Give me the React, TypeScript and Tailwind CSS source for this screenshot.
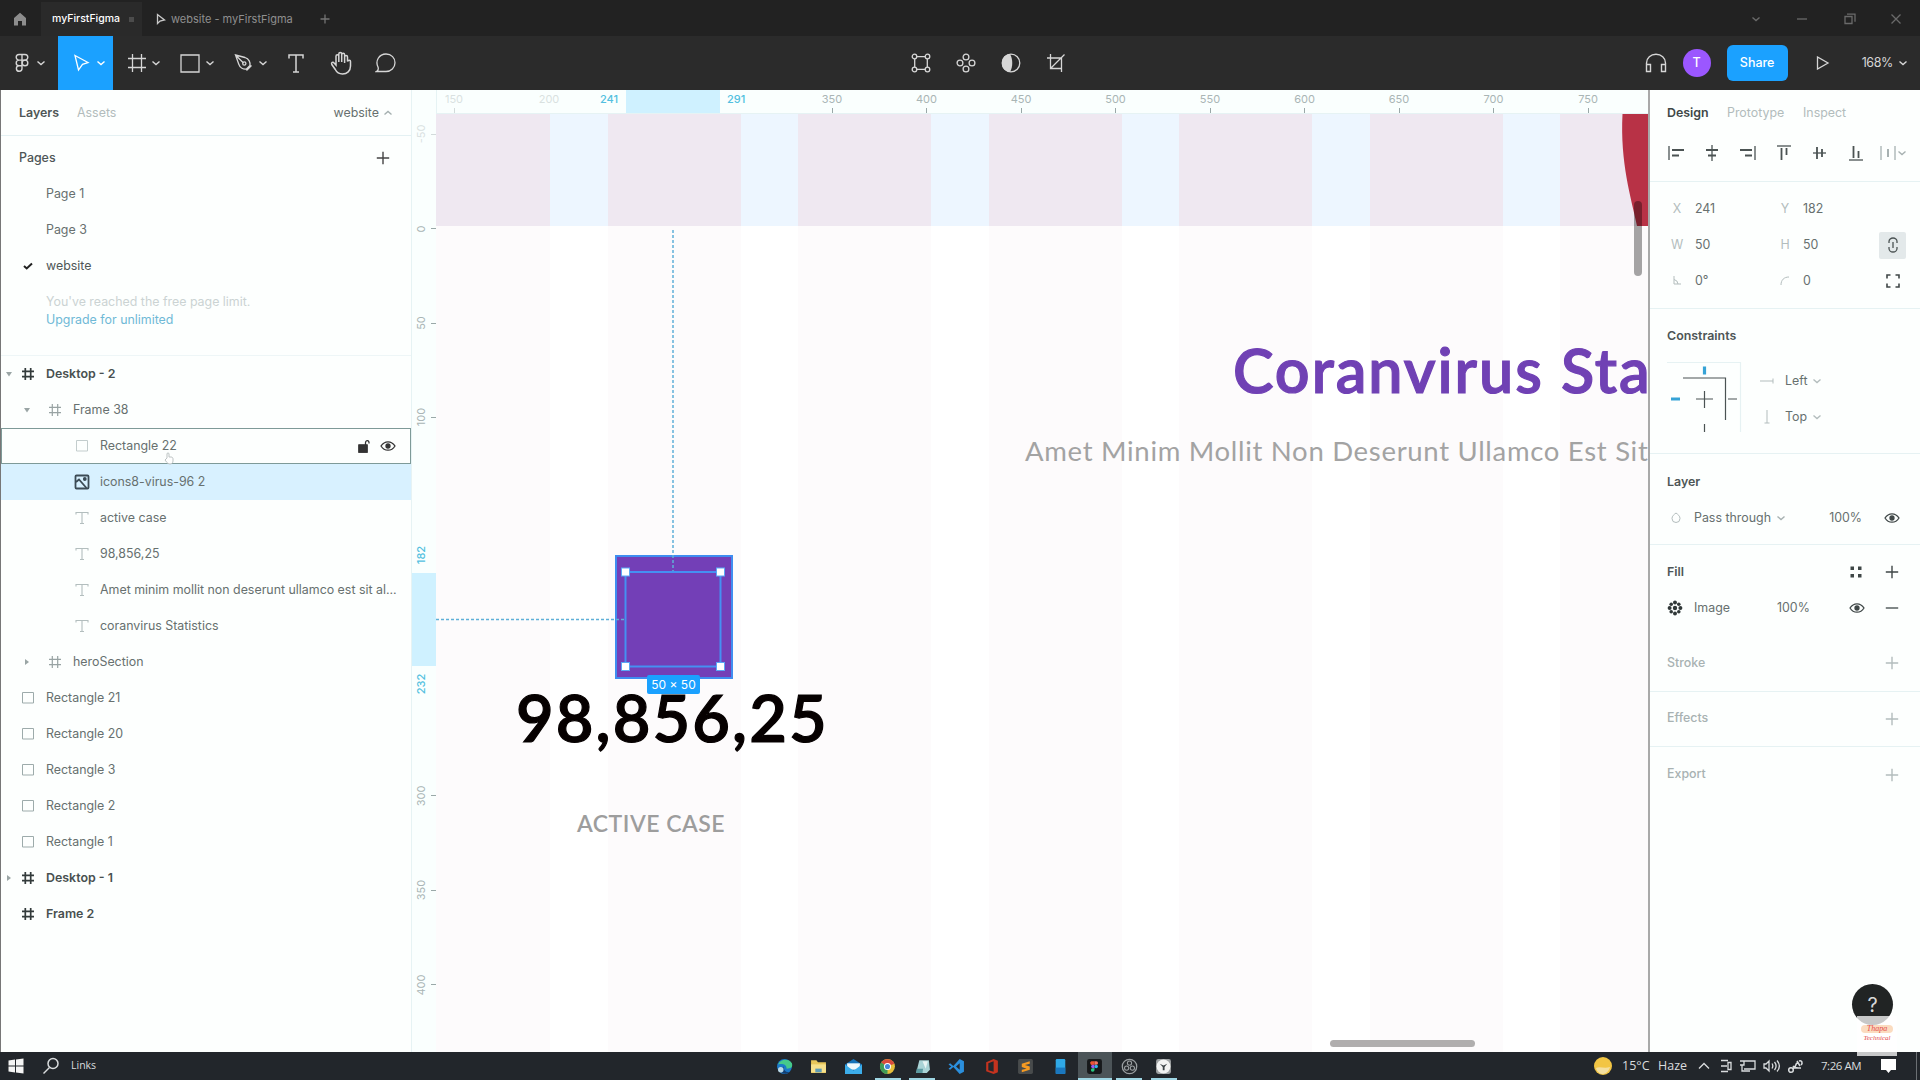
import type { ReactNode } from "react";

const ROW = "flex h-9 shrink-0 items-center";

function Svg({ w, h, children, className = "", sw = 1.3 }: { w: number; h: number; children: ReactNode; className?: string; sw?: number }) {
  return (
    <svg width={w} height={h} viewBox={`0 0 ${w} ${h}`} fill="none" stroke="currentColor" strokeWidth={sw} className={`shrink-0 ${className}`}>
      {children}
    </svg>
  );
}

const Chevron = ({ className = "" }: { className?: string }) => (
  <Svg w={16} h={16} className={className} sw={1.4}>
    <path d="M4.5 6.5 8 9.5l3.5-3" />
  </Svg>
);

const Plus = ({ className = "" }: { className?: string }) => (
  <Svg w={14} h={14} className={className} sw={1.4}>
    <path d="M7 .8v12.4M.8 7h12.4" />
  </Svg>
);

const Eye = ({ className = "" }: { className?: string }) => (
  <Svg w={16} h={12} className={className} sw={1.3}>
    <path d="M1 6c1.700-2.700 4-4.200 7-4.200S13.300 3.300 15 6c-1.700 2.700-4 4.200-7 4.200S2.700 8.700 1 6z" />
    <circle cx="8" cy="6" r="2" fill="currentColor" />
  </Svg>
);

const Hash = ({ className = "", sw = 1.2 }: { className?: string; sw?: number }) => (
  <Svg w={14} h={14} className={className} sw={sw}>
    <path d="M4.300 1v12M9.700 1v12M1 4.300h12M1 9.700h12" />
  </Svg>
);

/* ---------- Title bar ---------- */

function TitleBar() {
  return (
    <div className="flex h-9 items-center bg-[#222222] pt-[2px] text-[#8f8f8f]">
      <div className="flex w-[41px] justify-center">
        <Svg w={14} h={14} className="-ml-[2px] text-[#8d8d8d]">
          <path d="M1 6 7 .8 13 6v7.500H9V9H5v4.500H1z" fill="currentColor" stroke="none" />
        </Svg>
      </div>
      <div className="flex h-full w-[101px] items-center bg-[#2a2a2a] pl-[11px] font-medium text-white">
        <span className="w-[76px] text-[10.5px]">myFirstFigma</span>
        <span className="ml-px h-[5px] w-[5px] bg-[#4c4c4c]" />
      </div>
      <Svg w={10} h={12} className="ml-[14px] text-[#c9c9c9]">
        <path d="M1.500 1.500v9l2.500-2.500 4.500-1z" />
      </Svg>
      <span className="ml-[5px] w-[150px] whitespace-nowrap text-[11px]">website - myFirstFigma</span>
      <Svg w={10} h={10} className="-ml-px text-[#747474]"><path d="M5 .5v9M.5 5h9" /></Svg>
      <div className="ml-auto flex items-center text-[#6a6a6a]">
        <Chevron />
        <Svg w={12} h={12} className="ml-[32px]"><path d="M1 6h10" /></Svg>
        <Svg w={12} h={12} className="ml-[36px]"><path d="M1 3.500h7v7H1zM3 1.200h8v7.500" /></Svg>
        <Svg w={12} h={12} className="mr-[18px] ml-[34px]"><path d="m1.500 1.500 9 9m0-9-9 9" /></Svg>
      </div>
    </div>
  );
}

/* ---------- Toolbar ---------- */

function Tool({ children, active }: { children: ReactNode; active?: boolean }) {
  return (
    <div className={`flex h-full items-center pl-[11px] ${active ? "w-[55px] bg-[#1ba1ff] text-white" : "w-[53.5px]"}`}>
      <div className="flex w-6 justify-center">{children}</div>
      <Chevron />
    </div>
  );
}

function Toolbar() {
  return (
    <div className="flex h-[54px] items-center bg-[#2b2b2b] text-[#d6d6d6]">
      <div className="flex w-[58px] items-center pl-[10px]">
        <Svg w={24} h={20} sw={1.4}>
          <path d="M12 1.500H9a2.800 2.800 0 0 0 0 5.600h3zM12 1.500h3a2.800 2.800 0 0 1 0 5.600h-3zM12 7.100H9a2.800 2.800 0 0 0 0 5.600h3zM12 12.700H9a2.800 2.800 0 1 0 3 2.800z" />
          <circle cx="15" cy="9.900" r="2.800" />
        </Svg>
        <Chevron className="-ml-px" />
      </div>
      <Tool active>
        <Svg w={18} h={18} className="ml-[2px]"><path d="m2 1.500 13 7-5.500 1.800-4 5.700z" /></Svg>
      </Tool>
      <Tool>
        <Svg w={18} h={18} className="ml-[2px]"><path d="M4.500 0v18M13.500 0v18M0 4.500h18M0 13.500h18" /></Svg>
      </Tool>
      <Tool>
        <Svg w={20} h={19}><path d="M1 1h18v17H1z" /></Svg>
      </Tool>
      <Tool>
        <Svg w={20} h={20} className="ml-[2px]">
          <path d="m1.500 2 9.500 2.500c4 1.200 5.500 5 5 8l-3.500 3.500c-3 .5-6.500-1-7.800-5zM1.500 2l8 8M12.500 17.500l5-5" />
          <circle cx="10.300" cy="10.500" r="1.600" />
        </Svg>
      </Tool>
      <div className="flex w-[45px] justify-center">
        <Svg w={16} h={19} sw={1.500}><path d="M1 4.500V1h14v3.500M8 1v17M5 18h6" /></Svg>
      </div>
      <div className="flex w-[45px] justify-center">
        <Svg w={22} h={24} sw={1.500}>
          <path d="M6 14V5.200c0-2 2.800-2 2.800 0V11 3c0-2 2.900-2 2.900 0v8V3.800c0-2 2.900-2 2.900 0V12 6c0-2 2.900-1.900 2.900 0v4.500c1-2 3-1.500 3 0V15c0 5-3.500 8-8 8-3.500 0-6-2-7.200-4.500L1.800 13.500c-1-2 1.200-3 2.300-1.500z" />
        </Svg>
      </div>
      <div className="flex w-[45px] justify-center">
        <Svg w={22} h={20}><path d="M1.500 18.500c1.800-1 2.200-2.500 1.500-4.500-3-6 1-13 8-13 5.500 0 9 4 9 8.700 0 5-4 8.800-9 8.800z" /></Svg>
      </div>
      <div className="ml-[502px] flex items-center gap-[25px]">
        <Svg w={20} h={20}>
          <circle cx="3.500" cy="3.500" r="2.300" /><circle cx="16.500" cy="3.500" r="2.300" />
          <circle cx="3.500" cy="16.500" r="2.300" /><circle cx="16.500" cy="16.500" r="2.300" />
          <path d="M5.800 3.700h8.400M5.800 16.300h8.400M3.700 5.800v8.400M16.300 5.800v8.400" />
        </Svg>
        <Svg w={20} h={20}>
          <circle cx="10" cy="4" r="2.900" /><circle cx="10" cy="16" r="2.900" />
          <circle cx="4" cy="10" r="2.900" /><circle cx="16" cy="10" r="2.900" />
        </Svg>
        <Svg w={20} h={20}>
          <circle cx="10" cy="10" r="8.800" />
          <path d="M9 1C3 2 1 6 1 10s2 8 8 9c3-5 3-13 0-18z" fill="currentColor" stroke="none" />
        </Svg>
        <Svg w={20} h={20}><path d="M4.500 1v14.500H16M1 5h14.500v14M4.500 15.500 18.500 1.500" /></Svg>
      </div>
      <div className="ml-auto flex items-center">
        <Svg w={22} h={20} sw={1.400}><path d="M1.500 15v-5a9.500 8.700 0 0 1 19 0v5M1.500 11.500h4v7h-4zM16.500 11.500h4v7h-4z" /></Svg>
        <div className="ml-4 flex h-7 w-7 items-center justify-center rounded-full bg-[#9b57ff] text-[12.5px] font-medium text-white">T</div>
        <div className="ml-4 flex h-9 w-[61px] items-center justify-center rounded-[6px] bg-[#1ba1ff] text-[12.500px] font-medium text-white">Share</div>
        <Svg w={14} h={14} className="ml-[28px]"><path d="M1.500 1v12L12 7z" /></Svg>
        <span className="ml-[32px] text-[12.5px] tracking-[-0.03em]">168%</span>
        <Chevron className="mr-[9px] ml-[2px]" />
      </div>
    </div>
  );
}

/* ---------- Layers panel ---------- */

type LayerItem = { name: string; kind: "frame" | "rect" | "text" | "image"; depth: number; arrow?: "open" | "closed"; bold?: boolean; state?: "hover" | "selected" };

const LAYERS: LayerItem[] = [
  { name: "Desktop - 2", kind: "frame", depth: 0, arrow: "open", bold: true },
  { name: "Frame 38", kind: "frame", depth: 1, arrow: "open" },
  { name: "Rectangle 22", kind: "rect", depth: 2, state: "hover" },
  { name: "icons8-virus-96 2", kind: "image", depth: 2, state: "selected" },
  { name: "active case", kind: "text", depth: 2 },
  { name: "98,856,25", kind: "text", depth: 2 },
  { name: "Amet minim mollit non deserunt ullamco est sit al...", kind: "text", depth: 2 },
  { name: "coranvirus Statistics", kind: "text", depth: 2 },
  { name: "heroSection", kind: "frame", depth: 1, arrow: "closed" },
  { name: "Rectangle 21", kind: "rect", depth: 0 },
  { name: "Rectangle 20", kind: "rect", depth: 0 },
  { name: "Rectangle 3", kind: "rect", depth: 0 },
  { name: "Rectangle 2", kind: "rect", depth: 0 },
  { name: "Rectangle 1", kind: "rect", depth: 0 },
  { name: "Desktop - 1", kind: "frame", depth: 0, arrow: "closed", bold: true },
  { name: "Frame 2", kind: "frame", depth: 0, bold: true },
];

const INDENT = ["pl-[3px]", "pl-[21px]", "pl-[57px]"];

function LayerIcon({ item }: { item: LayerItem }) {
  if (item.kind === "frame") return <Hash className={item.bold ? "text-[#333b3b]" : "text-[#98a3a3]"} sw={item.bold ? 1.700 : 1.200} />;
  if (item.kind === "rect")
    return <Svg w={14} h={14} className={item.depth ? "text-[#c3cdcd]" : "text-[#9dabab]"} sw={1}><path d="M1.500 1.500h11v10.500h-11z" /></Svg>;
  if (item.kind === "text")
    return <Svg w={14} h={14} className="text-[#b3bebe]" sw={1.100}><path d="M1 3.500v-2h12v2M7 1.500v11M5 12.500h4" /></Svg>;
  return (
    <Svg w={16} h={16} className="text-[#3c4b55]" sw={1.800}>
      <rect x="1.500" y="1.500" width="13" height="13" rx="1" />
      <path d="m2 8 3-2.500 7.500 8.500" />
      <circle cx="10.800" cy="5" r="1" fill="currentColor" />
    </Svg>
  );
}

function LayerRow({ item }: { item: LayerItem }) {
  const tone = item.state === "hover" ? "border border-[#7e9a98]" : item.state === "selected" ? "border border-[#d8f1ff] bg-[#d8f1ff]" : "border border-transparent";
  return (
    <div className={`${ROW} ${tone} ${INDENT[item.depth]}`}>
      <span className="flex w-[8px] justify-center text-[#9aa5a5]">
        {item.arrow && (
          <Svg w={6} h={6}>
            <path d={item.arrow === "open" ? "M0 1h6L3 5.500z" : "M1 0v6l4-3z"} fill="currentColor" stroke="none" />
          </Svg>
        )}
      </span>
      <span className={`${item.depth === 1 ? "ml-[14px]" : "ml-[5px]"} flex w-[20px] justify-center`}><LayerIcon item={item} /></span>
      <span className={`ml-[8px] whitespace-nowrap ${item.bold ? "font-semibold text-[#485050]" : "text-[#67706f]"}`}>{item.name}</span>
      {item.state === "hover" && (
        <span className="mr-[14px] ml-auto flex items-center gap-[10px] text-[#333]">
          <Svg w={12} h={14}><path d="M1 6.500h8v6.500H1zM7.500 7V4c0-3.500 4-3 3.500.5" fill="none" /><path d="M1 6h8v7H1z" fill="currentColor" /></Svg>
          <Eye />
        </span>
      )}
    </div>
  );
}

function LeftPanel() {
  return (
    <aside className="relative flex w-[411px] shrink-0 flex-col border-l border-[#777] bg-[#fdfffe] pt-[0.5px] text-[12.4px] text-[#67706f]">
      <div className="flex h-[45.5px] items-center border-b border-[#e4f1f3] pt-px pr-[15px] pl-[18px]">
        <span className="font-semibold text-[#4e5656]">Layers</span>
        <span className="ml-[18px] text-[#b2bcbc]">Assets</span>
        <span className="ml-auto">website</span>
        <Chevron className="ml-px rotate-180 text-[#a5b0b0]" />
      </div>
      <div className={`${ROW} mt-1 justify-between pr-[21px] pl-[18px]`}>
        <span className="font-medium text-[#4e5656]">Pages</span>
        <Plus className="text-[#444]" />
      </div>
      <div className={`${ROW} pl-[45px]`}>Page 1</div>
      <div className={`${ROW} pl-[45px]`}>Page 3</div>
      <div className={`${ROW} pl-[22px]`}>
        <Svg w={10} h={8} className="text-[#222]" sw={2}><path d="m1 4 2.700 2.500L9 1.500" /></Svg>
        <span className="ml-[13px] text-[#4e5656]">website</span>
      </div>
      <div className="flex h-[72px] flex-col border-b border-[#eef6f7] pt-[9px] pl-[45px] leading-[18px]">
        <span className="text-[#cbd3d3]">You've reached the free page limit.</span>
        <span className="text-[#6fb9d6]">Upgrade for unlimited</span>
      </div>
      {LAYERS.map((item) => <LayerRow key={item.name} item={item} />)}
      <Svg w={10} h={13} className="absolute top-[362px] left-[163px] text-[#bcc3c3]" sw={1}>
        <path d="M3 6V2c0-1.500 2-1.500 2 0v3h2c1.500 0 2 1 2 2v2c0 2-1.500 3-3 3S3 11 1 8z" fill="#fff" />
      </Svg>
    </aside>
  );
}

/* ---------- Canvas ---------- */

const H_TICKS = [
  { v: "150", x: 454, faint: true }, { v: "200", x: 549, faint: true, noTick: true }, { v: "350", x: 832 }, { v: "400", x: 926.5 }, { v: "450", x: 1021 },
  { v: "500", x: 1115.5 }, { v: "550", x: 1210 }, { v: "600", x: 1304.5 }, { v: "650", x: 1399 }, { v: "700", x: 1493.500 }, { v: "750", x: 1588 },
];

const V_TICKS = [
  { v: "-50", y: 134, faint: true }, { v: "0", y: 228.500 }, { v: "50", y: 323 }, { v: "100", y: 417 },
  { v: "300", y: 795.500 }, { v: "350", y: 890 }, { v: "400", y: 984.500 },
];

const LAYOUT_COLUMNS = ["w-[114px]", "w-[133px]", "w-[133px]", "w-[133px]", "w-[133px]", "w-[133px]", "w-[89px]"];

function TopRuler() {
  return (
    <div className="relative ml-6 h-6 overflow-hidden border-b border-l border-[#e6f3f4] bg-[#fafffe] text-[11px] text-[#a9b5b5]">
      {H_TICKS.map((t) => (
        <div key={t.v} className={`absolute top-[1px] flex w-10 -translate-x-1/2 flex-col items-center ${t.faint ? "opacity-40" : ""}`} style={{ left: t.x - 437 }}>
          <span className="h-[17px] leading-[16px]">{t.v}</span>
          {!t.noTick && <span className="h-[6px] w-px bg-[#9aa8a8]" />}
        </div>
      ))}
      <div className="absolute top-0 left-[189px] h-6 w-[94px] bg-[#cff1ff]" />
      <span className="absolute top-[1px] left-[163px] font-medium leading-[16px] text-[#52bfe0]">241</span>
      <span className="absolute top-[1px] left-[290px] font-medium leading-[16px] text-[#52bfe0]">291</span>
    </div>
  );
}

function SideRuler() {
  return (
    <div className="relative w-6 shrink-0 overflow-hidden bg-[#fafffe] text-[11px] text-[#a9b5b5]">
      {V_TICKS.map((t) => (
        <div key={t.v} className={`absolute left-0 flex h-6 w-6 -translate-y-1/2 items-center justify-between pl-[1px] ${t.faint ? "opacity-40" : ""}`} style={{ top: t.y - 114 }}>
          <span className="flex h-4 w-4 -rotate-90 items-center justify-center">{t.v}</span>
          <span className="h-px w-[5px] bg-[#9aa8a8]" />
        </div>
      ))}
      <div className="absolute top-[459px] left-0 h-[93px] w-6 bg-[#cff1ff]" />
      <span className="absolute top-[433px] left-[1px] flex h-4 w-4 -rotate-90 items-center justify-center font-medium text-[#52bfe0]">182</span>
      <span className="absolute top-[562px] left-[1px] flex h-4 w-4 -rotate-90 items-center justify-center font-medium text-[#52bfe0]">232</span>
    </div>
  );
}

function Canvas() {
  return (
    <main className="flex min-w-0 flex-1 flex-col border-l border-[#e6f3f4] bg-[#fafffe]">
      <TopRuler />
      <div className="flex min-h-0 flex-1">
        <SideRuler />
        <div className="relative flex-1 overflow-hidden bg-white">
          <div className="h-[112px] bg-[#edf6ff]" />
          <div className="absolute inset-0 flex gap-[57.500px]">
            {LAYOUT_COLUMNS.map((w, i) => (
              <div key={i} className={`${w} shrink-0`}>
                <div className="h-[112px] bg-[#efe8f1]" />
                <div className="h-full bg-[#fdfbfc]" />
              </div>
            ))}
          </div>
          <svg width="28" height="112" viewBox="0 0 28 112" className="absolute top-0 left-[1184px]">
            <path d="M2.500 0H28v112H17C11 83 0 49 2.500 0z" fill="#b83246" />
          </svg>

          <span className="absolute top-[216px] left-[797px] whitespace-nowrap font-[Lato] text-[61px] leading-[80px] font-semibold tracking-[0.032em] text-[#7041b4] [-webkit-text-stroke:1.2px_#7041b4]">Coranvirus Sta</span>
          <span className="absolute top-[317px] left-[589px] whitespace-nowrap font-[Lato] text-[27.5px] leading-[40px] tracking-[0.7px] text-[#a3a3a3]">Amet Minim Mollit Non Deserunt Ullamco Est Sit</span>

          <div className="absolute top-[441px] left-[179px] h-[124px] w-[118px] border-2 border-[#3f8df0] bg-[#733fb7]" />
          <span className="absolute top-[563px] left-[80px] whitespace-nowrap font-[Lato] text-[65px] leading-[80px] font-semibold tracking-[2.1px] text-[#060000] [-webkit-text-stroke:1.2px_#060000]">98,856,25</span>
          <span className="absolute top-[694px] left-[141px] whitespace-nowrap font-[Lato] text-[23px] leading-[30px] font-semibold tracking-[0.5px] text-[#9d9d9d]">ACTIVE CASE</span>

          <svg width="300" height="570" viewBox="0 0 300 570" className="absolute top-0 left-0" fill="none">
            <path d="M237 116v342M0 505.500h190" stroke="#5fb0d8" strokeWidth="1.500" strokeDasharray="3 2" />
            <path d="M189.500 458h95v94.500h-95z" stroke="#4590f2" strokeWidth="2" />
            {[[189.5, 458], [284.5, 458], [189.5, 552.5], [284.5, 552.5]].map(([x, y]) => (
              <rect key={`${x}-${y}`} x={x - 4} y={y - 4} width="8" height="8" fill="#fff" stroke="#5aa7f5" />
            ))}
          </svg>
          <span className="absolute top-[561px] left-[211px] flex h-[19px] w-[53px] items-center justify-center rounded-[2px] bg-[#1ba1ff] text-[12px] text-white">50 × 50</span>

          <div className="absolute top-[87px] left-[1198px] h-[75px] w-[8px] rounded-full bg-black/35" />
          <div className="absolute top-[926px] left-[894px] h-[7px] w-[145px] rounded-full bg-[#b0aeae]" />
        </div>
      </div>
    </main>
  );
}

/* ---------- Design panel ---------- */

function Field({ label, value, className }: { label: ReactNode; value: string; className: string }) {
  return (
    <div className={`flex items-center ${className}`}>
      <span className="flex w-[16px] justify-center text-[#b3bdbd]">{label}</span>
      <span className="ml-[10px]">{value}</span>
    </div>
  );
}

function EmptySection({ title, border }: { title: string; border?: boolean }) {
  return (
    <section className={`flex h-[55.5px] items-center justify-between pr-[21px] pl-[17px] text-[#a8b2b2] ${border ? "border-b border-[#e6f2f3]" : ""}`}>
      <span className="font-medium">{title}</span>
      <Plus className="text-[#b3bdbd]" />
    </section>
  );
}

function AlignIcons() {
  return (
    <div className="flex h-[46px] items-center border-b border-[#e6f2f3] pb-[11px] pl-[18px] text-[#4b5353]">
      <div className="flex items-center gap-[20px]">
        <Svg w={16} h={16} sw={1.800}><path d="M1 1v14" strokeWidth="1.300" /><path d="M4 5h12M4 10.500h7" /></Svg>
        <Svg w={16} h={16} sw={1.800}><path d="M8 0v16" strokeWidth="1.300" /><path d="M2 5h12M4 10.500h8" /></Svg>
        <Svg w={16} h={16} sw={1.800}><path d="M15 1v14" strokeWidth="1.300" /><path d="M0 5h12M5 10.500h7" /></Svg>
        <Svg w={16} h={16} sw={1.800}><path d="M1 1h14" strokeWidth="1.300" /><path d="M5.500 3v12M10.500 3v7" /></Svg>
        <Svg w={16} h={16} sw={1.800}><path d="M1 8h13" strokeWidth="1.300" /><path d="M5 2v12M10 4v8" /></Svg>
        <Svg w={16} h={16} sw={1.800}><path d="M1 15h14" strokeWidth="1.300" /><path d="M5.500 1v12M10.500 6v7" /></Svg>
      </div>
      <Svg w={16} h={16} className="ml-[16px] text-[#a7b1b1]"><path d="M1 1v14M15 1v14" /><path d="M8 4v8" strokeWidth="2" /></Svg>
      <Chevron className="-ml-[2px] text-[#a7b1b1]" />
    </div>
  );
}

function RightPanel() {
  return (
    <aside className="flex w-[272px] shrink-0 flex-col border-l-2 border-[#a9a9a9] bg-[#fdfffe] pt-[0.5px] text-[12.4px] text-[#67706f]">
      <div className="flex h-[45.5px] items-center pt-px pl-[17px] text-[#b2bcbc]">
        <span className="w-[60px] font-semibold text-[#3f4747]">Design</span>
        <span className="w-[76px]">Prototype</span>
        <span>Inspect</span>
      </div>
      <AlignIcons />

      <section className="h-[127px] border-b border-[#e6f2f3] pt-[9px]">
        <div className={ROW}>
          <Field className="w-[108px] pl-[19px]" label="X" value="241" />
          <Field className="pl-[19px]" label="Y" value="182" />
        </div>
        <div className={ROW}>
          <Field className="w-[108px] pl-[19px]" label="W" value="50" />
          <Field className="pl-[19px]" label="H" value="50" />
          <span className="mr-[14px] ml-auto flex h-[27px] w-[27px] items-center justify-center rounded-[2px] bg-[#e3e9ea] text-[#4b5353]">
            <Svg w={12} h={16}><path d="M2 6V4.500a4 3.500 0 0 1 8 0V6M2 10v1.500a4 3.500 0 0 0 8 0V10M6 5v6" /></Svg>
          </span>
        </div>
        <div className={ROW}>
          <Field className="w-[108px] pl-[19px]" label={<Svg w={9} h={9} sw={1}><path d="M1 0v8h7M1 3.500A5 5 0 0 1 5 8" /></Svg>} value="0°" />
          <Field className="pl-[19px]" label={<Svg w={10} h={10} sw={1}><path d="M1 9c0-5 3-8 8-8" /></Svg>} value="0" />
          <Svg w={14} h={14} className="mr-[20px] ml-auto text-[#3f4747]" sw={1.600}><path d="M1 4.500V1h3.500M9.500 1H13v3.500M13 9.500V13H9.500M4.500 13H1V9.500" /></Svg>
        </div>
      </section>

      <section className="h-[145px] border-b border-[#e6f2f3] pt-[9px] pl-[17px]">
        <div className={`${ROW} font-semibold text-[#4e5656]`}>Constraints</div>
        <div className="mt-[9px] flex">
          <Svg w={75} h={72} sw={1.200} className="-mt-px text-[#4b5353]">
            <path d="M0 .5h74M73.500 0v70" stroke="#e6f2f3" />
            <path d="M16 16h42.500v42M61 37h9M37.500 62v8M37.500 29v17M29 37h17" />
            <path d="M37.500 4.500v8M4 37h9" stroke="#36a3d6" strokeWidth="3.200" />
          </Svg>
          <div className="ml-[18px]">
            <div className={ROW}>
              <Svg w={14} h={8} className="text-[#b3bdbd]" sw={1}><path d="M0 4h13M13 1.500v5" /></Svg>
              <span className="ml-[11px]">Left</span><Chevron className="ml-[2px] text-[#b3bdbd]" />
            </div>
            <div className={ROW}>
              <Svg w={14} h={14} className="text-[#b3bdbd]" sw={1}><path d="M7 0v13M4.500 13h5" /></Svg>
              <span className="ml-[11px]">Top</span><Chevron className="ml-[2px] text-[#b3bdbd]" />
            </div>
          </div>
        </div>
      </section>

      <section className="h-[91px] border-b border-[#e6f2f3] pt-[10px] pl-[17px]">
        <div className={`${ROW} font-semibold text-[#4e5656]`}>Layer</div>
        <div className={`${ROW} pr-[20px]`}>
          <Svg w={18} h={12} className="text-[#b3bdbd]" sw={1}><path d="M9 1c2 1.500 4 3 4 5.500a4 4 0 0 1-8 0C5 4 7 2.500 9 1z" /></Svg>
          <span className="ml-[9px]">Pass through</span><Chevron className="ml-[2px] text-[#a7b1b1]" />
          <span className="mr-[22px] ml-auto">100%</span>
          <Eye className="text-[#3f4747]" />
        </div>
      </section>

      <section className="h-[91px] pt-[9px] pr-[21px] pl-[17px]">
        <div className={`${ROW} font-semibold text-[#4e5656]`}>
          Fill
          <Svg w={12} h={12} className="mr-[23px] ml-auto text-[#3f4747]">
            <path d="M.5.500h3.500v3.500H.500zM8 .500h3.500v3.500H8zM.500 8h3.500v3.500H.500zM8 8h3.500v3.500H8z" fill="currentColor" stroke="none" />
          </Svg>
          <Plus className="text-[#3f4747]" />
        </div>
        <div className={ROW}>
          <Svg w={16} h={16} className="text-[#303838]" sw={0}>
            <g fill="currentColor">
              <circle cx="8" cy="2.600" r="2" /><circle cx="8" cy="13.400" r="2" /><circle cx="2.600" cy="8" r="2" /><circle cx="13.400" cy="8" r="2" />
              <circle cx="4.200" cy="4.200" r="1.800" /><circle cx="11.800" cy="4.200" r="1.800" /><circle cx="4.200" cy="11.800" r="1.800" /><circle cx="11.800" cy="11.800" r="1.800" />
              <circle cx="8" cy="8" r="2.200" />
            </g>
          </Svg>
          <span className="ml-[11px] w-[83px]">Image</span>
          <span className="w-[72px]">100%</span>
          <Eye className="text-[#3f4747]" />
          <Svg w={14} h={14} className="ml-auto text-[#3f4747]"><path d="M.800 7h12.400" /></Svg>
        </div>
      </section>

      <EmptySection title="Stroke" border />
      <EmptySection title="Effects" border />
      <EmptySection title="Export" />
    </aside>
  );
}

/* ---------- Taskbar ---------- */

const TASK_ICONS: { id: string; open?: boolean; active?: boolean; art: ReactNode }[] = [
  { id: "edge", art: <><circle cx="8" cy="8" r="7" fill="#1b79c9" /><path d="M2 6C4 1 12 0 15 5c1 4-1 5-5 5 0-4-4-5-8-4z" fill="#46c98b" /><path d="M7 8c0 4 3 6 6 5-3 3-8 2-9-2z" fill="#123f73" /><circle cx="4.500" cy="11" r="2.600" fill="#bcd9e6" /></> },
  { id: "files", art: <><path d="M1 2h5l1.500 2H15v10H1z" fill="#e8c65a" /><path d="M1 6h14v7.500H1z" fill="#f6e08c" /><path d="M5 10h6v3.500H5z" fill="#5e9bb5" /></> },
  { id: "mail", art: <><path d="M0 6l8-5 8 5v9H0z" fill="#1672b8" /><path d="M2 5h12v6H2z" fill="#eef7fb" /><path d="M0 6l8 6 8-6v9H0z" fill="#3cadea" /></> },
  { id: "chrome", open: true, art: <><circle cx="8" cy="8" r="7" fill="#e5bd3b" /><path d="M8 8 2 4.500a7 7 0 0 1 12.500 1z" fill="#d94b3d" /><path d="M8 8 2 4.300A7 7 0 0 0 8 15z" fill="#3f9b57" /><circle cx="8" cy="8" r="3.300" fill="#fff" /><circle cx="8" cy="8" r="2.400" fill="#4787d8" /></> },
  { id: "notes", open: true, art: <><path d="M5 2h9l1 9-3 3H2z" fill="#a9d3d6" /><path d="M8 3h5l-2 7z" fill="#e8f4f4" /><path d="M2.500 10h6L8 14H2z" fill="#5c9aa1" /></> },
  { id: "code", art: <><path d="M11 1l4 2v10l-4 2-6-6.500-3 2.500-1.500-1L3 8 .500 6 2 5l3 2.500z" fill="#2b8fdd" /><path d="M11 5v6L7.500 8z" fill="#23272c" /></> },
  { id: "office", art: <><path d="M3 4l7-3 4 1.500v11L10 15l-7-2.500z" fill="#c5331f" /><path d="M5 5l5-2v10l-5-1.500z" fill="#23272c" /></> },
  { id: "sublime", art: <><rect x="1" y="1" width="14" height="14" rx="1.500" fill="#484b4c" /><path d="M12 3 4.500 5.500v3L9 10l-4.500 1v2.500L12 11V8L7.500 6.500 12 5.500z" fill="#f59a22" /></> },
  { id: "phone", art: <><rect x="3.500" y="1" width="9" height="14" rx="1" fill="#2fa8e6" /><path d="M3.500 9h9v6h-9z" fill="#1a77be" /></> },
  { id: "figma", open: true, active: true, art: <><rect x="1" y="1" width="14" height="14" rx="2" fill="#17191b" /><path d="M5 3h3v3.300H6.500A1.600 1.600 0 0 1 5 3z" fill="#ee5434" /><path d="M8 3h1.700a1.600 1.600 0 0 1 0 3.300H8z" fill="#f87462" /><path d="M8 6.300H6.500a1.600 1.600 0 0 0 0 3.300H8z" fill="#9a57ef" /><circle cx="9.600" cy="8" r="1.600" fill="#2fb3ee" /><path d="M8 9.600H6.500A1.700 1.700 0 1 0 8 11.300z" fill="#2ac982" /></> },
  { id: "obs", open: true, art: <><circle cx="8" cy="8" r="6.800" fill="#25282c" stroke="#9b9fa2" strokeWidth="1.200" /><circle cx="8" cy="4.800" r="2" stroke="#9b9fa2" /><circle cx="5.300" cy="9.500" r="2" stroke="#9b9fa2" /><circle cx="10.700" cy="9.500" r="2" stroke="#9b9fa2" /></> },
  { id: "clock", open: true, art: <><rect x="1" y="1" width="14" height="14" rx="2" fill="#9da0a2" /><circle cx="8" cy="8" r="6.500" fill="#f2f2f2" /><path d="M4.500 5.500 8 7l3.500-1.500L9 8.500v3H7.300v-3z" fill="#3b4145" /></> },
];

function Taskbar() {
  return (
    <footer className="flex h-7 items-center bg-[#22262b] font-['Open_Sans'] text-[12px] text-[#d9dcde]">
      <svg width="16" height="16" viewBox="0 0 16 16" className="ml-2 shrink-0" fill="#f4f4f4">
        <path d="M.500 2.500 7 1.600v6H.500zM8 1.400l7.500-1v7.200H8zM.500 8.500H7v6L.500 13.500zM8 8.500h7.500v7.100L8 14.600z" />
      </svg>
      <Svg w={18} h={18} className="ml-[18px]" sw={1.500}><circle cx="11" cy="6.500" r="5" /><path d="M7.500 10.500 1.500 16.500" /></Svg>
      <span className="ml-[11px] w-[40px] text-[10.500px]">Links</span>
      <div className="ml-[656px] flex h-full">
        {TASK_ICONS.map((icon) => (
          <div key={icon.id} className={`relative flex h-full w-[34.5px] items-center justify-center ${icon.active ? "bg-[#4c5458]" : ""}`}>
            <svg width="17" height="17" viewBox="0 0 16 16" fill="none">{icon.art}</svg>
            {icon.open && <span className={`absolute bottom-0 h-[2px] bg-[#9fd6e4] ${icon.active ? "w-full" : "w-[26px]"}`} />}
          </div>
        ))}
      </div>
      <div className="ml-auto flex h-full items-center">
        <svg width="20" height="20" viewBox="0 0 20 20" fill="none">
          <circle cx="10" cy="10" r="9" fill="#f2c544" /><path d="M3 12c4-2 8 1 14-1-1 4-4 7-7 7s-6-2-7-6z" fill="#f4dfa0" />
        </svg>
        <span className="ml-[9px] w-[36px] text-[12.500px]">15°C</span>
        <span className="w-[37px] text-[12.500px]">Haze</span>
        <Svg w={18} h={16}><path d="m4 10.500 5-5 5 5" /></Svg>
        <Svg w={14} h={16} className="ml-[6px]"><path d="M2 2.500h7M2 13.500h7M2 8h6M9 4.500h3v7H9z" /></Svg>
        <Svg w={18} h={16} className="ml-[6px]"><path d="M5 3h11v8H5M1 3h4v4H1M3 7v6h8" /></Svg>
        <Svg w={18} h={16} className="ml-[6px]"><path d="M1 6h2l3-3v10l-3-3H1zM9 5.500c1 1.500 1 3.500 0 5M11.500 4c2 2.500 2 5.500 0 8M14 2.500c3 3.500 3 7.500 0 11" /></Svg>
        <Svg w={18} h={16} className="ml-[6px]" sw={1.500}><circle cx="4" cy="12" r="2.300" /><path d="M5.500 10.500C10 10 7 6 11 4.500M10 3l3 5M12 3c3-1 4 2 2 4M6 8c2 3 5 2 8 2" /></Svg>
        <span className="ml-[16px] w-[56px] whitespace-nowrap text-[11.500px] tracking-[-0.04em]">7:26 AM</span>
        <svg width="17" height="16" viewBox="0 0 17 16" className="ml-[3px]" fill="#fff"><path d="M1 1h15v11h-5l-2.500 3L6 12H1z" /></svg>
        <span className="mr-[3px] ml-[19px] h-full w-px bg-[#6b6f73]" />
      </div>
    </footer>
  );
}

export default function App() {
  return (
    <div className="relative flex h-[1080px] w-[1920px] flex-col overflow-hidden bg-white font-[Inter]">
      <TitleBar />
      <Toolbar />
      <div className="flex min-h-0 flex-1">
        <LeftPanel />
        <Canvas />
        <RightPanel />
      </div>
      <Taskbar />
      <div className="absolute top-[984px] left-[1852px] flex h-[41px] w-[41px] items-center justify-center rounded-full bg-[#212424] text-[20px] text-[#d8d8d8]">?</div>
      <div className="absolute top-[1016px] left-[1857px] flex h-10 w-10 flex-col items-center bg-white/75 pt-[9px] font-['Liberation_Serif'] text-[8px] leading-[10px] text-[#e44a4a] italic">
        <span className="flex h-[8px] w-8 items-center justify-center rounded-full bg-[#fbdcc0]">Thapa</span>
        <span className="text-[7px] leading-[11px]">Technical</span>
      </div>
    </div>
  );
}
